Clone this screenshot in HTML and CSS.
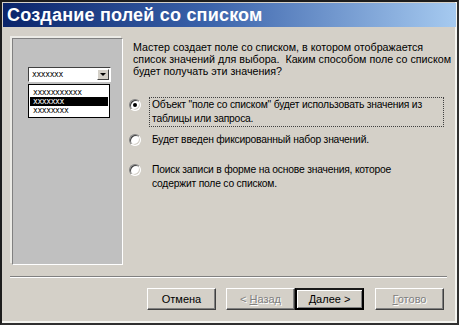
FILE: index.html
```html
<!DOCTYPE html>
<html>
  <head>
    <meta charset="utf-8" />
    <link rel="stylesheet" href="styles.css">
  </head>
  <body>
    <div class="window">
      <div class="titlebar">Создание полей со списком</div>

      <div class="content">
        <div class="preview">
          <div class="combo">
            <span class="combo-text">xxxxxxx</span>
            <span class="combo-btn"><span class="arrow"></span></span>
          </div>
          <div class="combo-list">
            <div class="combo-item">xxxxxxxxxxx</div>
            <div class="combo-item selected">xxxxxxx</div>
            <div class="combo-item">xxxxxxxx</div>
          </div>
        </div>

        <div class="main">
          <p class="intro">Мастер создает поле со списком, в котором отображается список значений для выбора.&nbsp; Каким способом поле со списком будет получать эти значения?</p>

          <div class="options">
            <div class="option first">
              <span class="radio checked"></span>
              <span class="option-label focused">Объект "поле со списком" будет использовать значения из таблицы или запроса.</span>
            </div>
            <div class="option second">
              <span class="radio"></span>
              <span class="option-label">Будет введен фиксированный набор значений.</span>
            </div>
            <div class="option third">
              <span class="radio"></span>
              <span class="option-label">Поиск записи в форме на основе значения, которое содержит поле со списком.</span>
            </div>
          </div>
        </div>
      </div>

      <div class="separator"></div>

      <div class="buttons">
        <button class="btn">Отмена</button>
        <button class="btn disabled back">&lt; <u>Н</u>азад</button>
        <button class="btn default"><u>Д</u>алее &gt;</button>
        <button class="btn disabled finish"><u>Г</u>отово</button>
      </div>
    </div>
  </body>
</html>
```

FILE: styles.css
```css
body {
  margin: 0;
  font-family: "Liberation Sans", Arial, sans-serif;
  font-size: 11px;
  color: #000;
  background: #d4d0c8;
}

.window {
  width: 459px;
  height: 325px;
  box-sizing: border-box;
  border: 2px solid #1c1c1c;
  border-right-color: #303030;
  border-bottom-color: #303030;
  padding: 1px 1px 2px 1px;
  background: #d4d0c8;
  display: flex;
  flex-direction: column;
  box-shadow: inset -2px -2px 0 #f4f4f0;
}

.titlebar {
  height: 24px;
  line-height: 24px;
  padding-left: 4px;
  color: #fff;
  font-weight: bold;
  font-size: 18px;
  letter-spacing: 0.2px;
  background: linear-gradient(90deg, #0a246a 0%, #3a62aa 45%, #a6caf0 100%);
  flex: none;
}

.content {
  display: flex;
  padding: 11px 0 0 9px;
  gap: 10px;
  flex: none;
}

.preview {
  width: 111px;
  height: 227px;
  box-sizing: border-box;
  background: #c0c0c0;
  border: 1px solid;
  border-color: #808080 #fff #fff #808080;
  box-shadow: -2px -2px 0 #ecebe6;
  padding: 28px 0 0 15px;
}

.combo {
  width: 83px;
  height: 15px;
  box-sizing: border-box;
  background: #fff;
  border: 1px solid;
  border-color: #404040 #fff #fff #404040;
  display: flex;
  justify-content: space-between;
  align-items: center;
}

.combo-text,
.combo-item {
  font-size: 8px;
  line-height: 9px;
  font-family: "DejaVu Sans Mono", monospace;
  letter-spacing: -0.4px;
}

.combo-text {
  padding-left: 3px;
}

.combo-btn {
  width: 12px;
  height: 11px;
  box-sizing: border-box;
  background: #d4d0c8;
  border: 1px solid;
  border-color: #fff #404040 #404040 #fff;
  display: flex;
  align-items: center;
  justify-content: center;
  margin-right: 1px;
}

.arrow {
  width: 0;
  height: 0;
  border-left: 3px solid transparent;
  border-right: 3px solid transparent;
  border-top: 3px solid #000;
}

.combo-list {
  margin-top: 2px;
  width: 82px;
  height: 34px;
  box-sizing: border-box;
  background: #fff;
  border: 1px solid #000;
  padding: 3px 1px 0 1px;
}

.combo-item {
  height: 9px;
  padding-left: 3px;
}

.combo-item.selected {
  background: #000;
  color: #fff;
}

.main {
  width: 318px;
  padding-top: 3px;
}

.intro {
  margin: 0;
  line-height: 12px;
  font-size: 10.7px;
}

.options {
  margin-top: 21px;
  display: flex;
  flex-direction: column;
}

.option {
  display: flex;
  align-items: flex-start;
}

.option.second {
  margin-top: 6px;
}

.option.third {
  margin-top: 15px;
}

.radio {
  flex: none;
  width: 12px;
  height: 12px;
  box-sizing: border-box;
  border-radius: 50%;
  background: #fff;
  border: 1px solid;
  border-color: #808080 #fff #fff #808080;
  box-shadow: inset 1px 1px 0 #404040, inset -1px -1px 0 #d4d0c8;
  margin: 1px 8px 0 -4px;
  position: relative;
}

.radio.checked::after {
  content: "";
  position: absolute;
  left: 3px;
  top: 3px;
  width: 4px;
  height: 4px;
  border-radius: 50%;
  background: #000;
}

.option-label {
  font-size: 10.3px;
  letter-spacing: -0.2px;
  line-height: 14px;
  padding: 0 2px;
  border: 1px solid transparent;
  margin-top: -1px;
  max-width: 262px;
}

.option-label.focused {
  border: 1px dotted #404040;
  width: 295px;
  max-width: none;
  box-sizing: border-box;
}

.separator {
  margin: 11px 9px 0 7px;
  height: 0;
  border-top: 1px solid #808080;
  border-bottom: 1px solid #fff;
  flex: none;
}

.buttons {
  display: flex;
  justify-content: flex-end;
  padding: 10px 12px 0 0;
  flex: none;
}

.btn {
  width: 69px;
  height: 22px;
  box-sizing: border-box;
  font-family: "Liberation Sans", Arial, sans-serif;
  font-size: 11px;
  color: #000;
  background: #d4d0c8;
  border: 1px solid;
  border-color: #fff #404040 #404040 #fff;
  box-shadow: inset -1px -1px 0 #808080;
  padding: 0;
  margin-left: 10px;
}

.btn u {
  text-decoration: underline;
}

.btn.disabled {
  color: #808080;
  text-shadow: 1px 1px 0 #fff;
}

.btn.default {
  margin-left: 0;
  border: 2px solid #000;
  border-top-color: #1a1a1a;
  box-shadow: inset 1px 1px 0 #fff, inset -1px -1px 0 #808080;
}

.btn.finish {
  margin-left: 11px;
}
```
